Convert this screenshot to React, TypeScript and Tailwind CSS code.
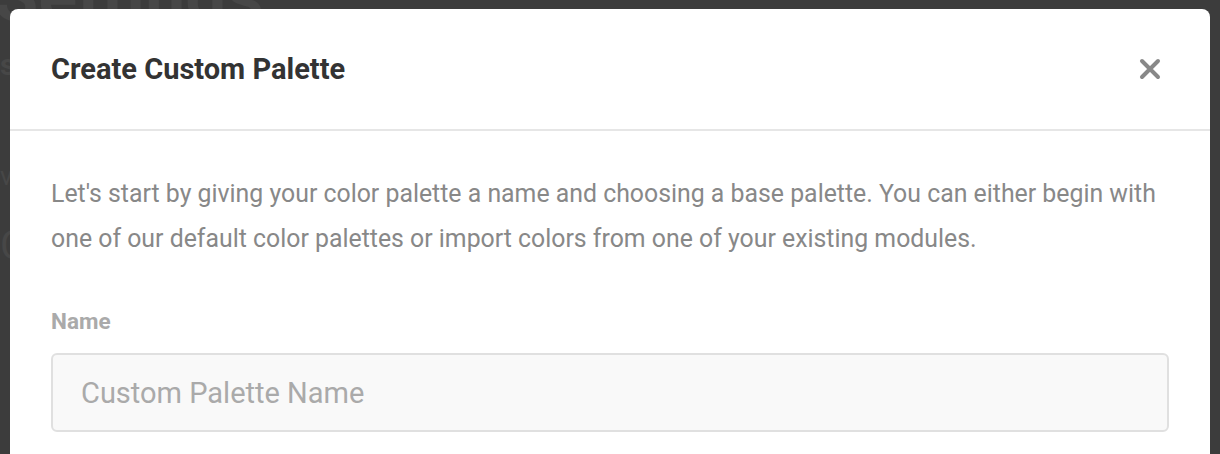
export default function App() {
  return (
    <div className="relative h-[454px] w-full overflow-hidden bg-[#3c3c3c] font-['Roboto',sans-serif]">
      {/* dimmed page behind the modal */}
      <div className="absolute inset-0 flex flex-col text-[#474747]">
        <div className="-mt-[46px] -ml-[6px] text-[72px] font-bold leading-[86px]">Settings</div>
        <div className="mt-[2px] text-[30px] font-bold">s</div>
        <div className="mt-[70px] text-[26px]">v</div>
        <div className="mt-[20px] text-[40px]">C</div>
      </div>

      <div className="relative mx-[10px] mt-[9px] rounded-lg bg-white">
        <div className="flex h-[122px] items-center justify-between border-b-2 border-[#e6e6e6] pl-[41px] pr-[49px]">
          <h2 className="mt-[2px] text-[29px] font-bold text-[#333]">Create Custom Palette</h2>
          <button className="flex h-[22px] w-[22px] items-center justify-center">
            <svg width="22" height="22" viewBox="0 0 22 22" fill="none" stroke="#888" strokeWidth="4" strokeLinecap="round">
              <path d="M3 3L19 19M19 3L3 19" />
            </svg>
          </button>
        </div>
        <div className="px-[41px] pt-[40px] pb-[40px]">
          <p className="text-[24.85px] leading-[45px] text-[#888]">
            Let's start by giving your color palette a name and choosing a base palette. You can either begin with one of our default color palettes or import colors from one of your existing modules.
          </p>
          <label className="mt-[48px] block text-[22.5px] font-bold leading-[24px] text-[#aaa]">Name</label>
          <input
            placeholder="Custom Palette Name"
            className="mt-[20px] h-[79px] w-full rounded-md border-2 border-[#e0e0e0] bg-[#f9f9f9] px-[28px] text-[29px] text-[#555] placeholder:text-[#aaa] outline-none"
          />
        </div>
      </div>
    </div>
  );
}
